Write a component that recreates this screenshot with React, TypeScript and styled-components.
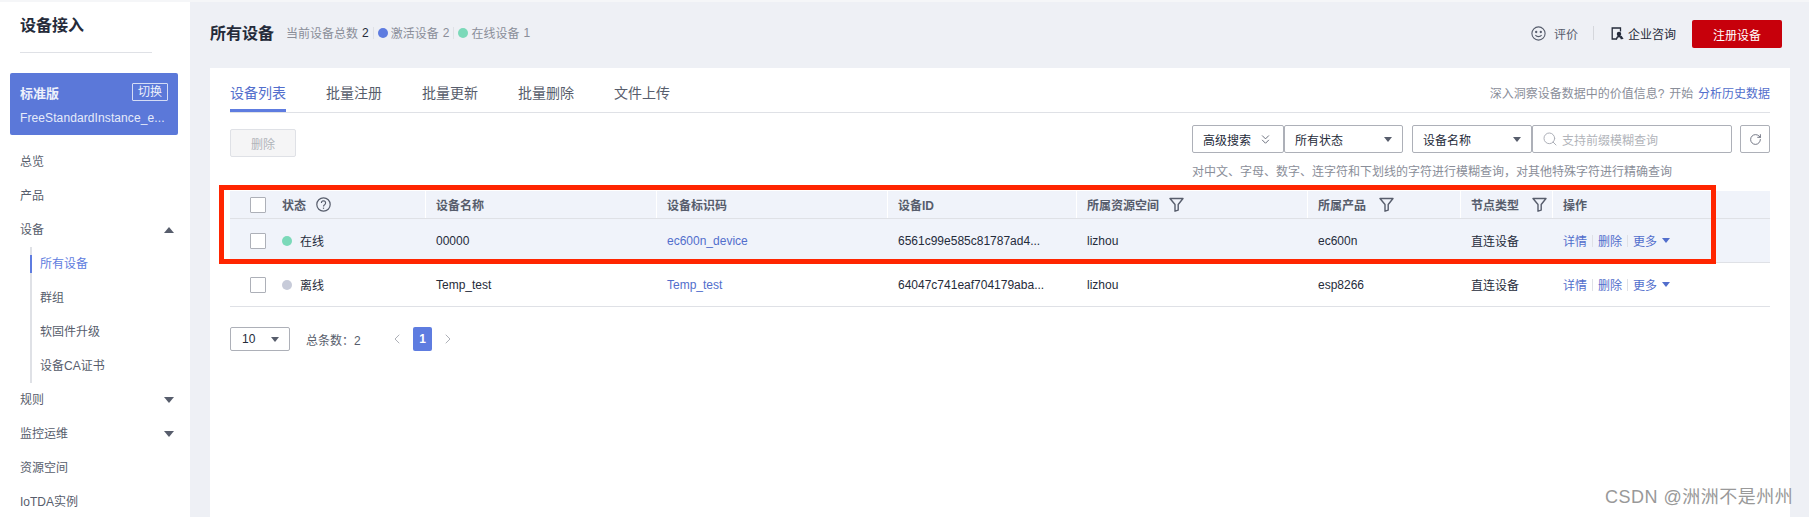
import * as React from 'react';
import styled, { createGlobalStyle } from 'styled-components';
import { ChevronLeft, ChevronRight, ChevronsDown, RotateCw, Search } from 'lucide-react';

const GlobalStyle = createGlobalStyle`
  html, body {
    margin: 0;
    height: 517px;
    overflow: hidden;
    background: #eef0f5;
  }
  * { box-sizing: border-box; }
  body {
    font-family: "Liberation Sans", "Noto Sans CJK SC", sans-serif;
    font-size: 12px;
    color: #252b3a;
  }
`;

const COLUMNS = '196px 231px 231px 189px 231px 153px 92px 217px';

const Page = styled.div`
  position: relative;
  display: flex;
  width: 1809px;
  height: 517px;
  overflow: hidden;
  border-top: 2px solid #f5f6f8;
`;

const Sidebar = styled.aside`
  flex: 0 0 190px;
  background: #fff;
  padding: 0 12px 0 10px;
  overflow: hidden;
`;

const SideTitle = styled.h1`
  margin: 0 0 0 10px;
  width: 132px;
  height: 51px;
  padding-top: 14px;
  border-bottom: 1px solid #dfe1e6;
  font-size: 16px;
  line-height: 20px;
  font-weight: 700;
  color: #252b3a;
`;

const InstanceCard = styled.div`
  margin-top: 20px;
  height: 62px;
  padding: 10px 10px 0;
  border-radius: 2px;
  background: #5b78d9;
  color: #fff;
`;

const InstanceTop = styled.div`
  display: flex;
  justify-content: space-between;
  align-items: center;
  height: 18px;
  font-size: 13px;
  font-weight: 700;
  color: #eef1fb;
`;

const SwitchTag = styled.span`
  width: 36px;
  height: 18px;
  border: 1px solid #d5dcf5;
  border-radius: 1px;
  font-size: 12px;
  font-weight: 400;
  line-height: 16px;
  text-align: center;
`;

const InstanceName = styled.div`
  margin-top: 9px;
  font-size: 12px;
  line-height: 16px;
  color: #e6ebfa;
  letter-spacing: 0.1px;
`;

const Menu = styled.nav`
  margin-top: 10px;
  display: flex;
  flex-direction: column;
`;

const MenuItem = styled.div`
  display: flex;
  justify-content: space-between;
  align-items: center;
  height: 34px;
  padding: 0 4px 0 10px;
  color: #575d6c;
  line-height: 34px;
`;

const SubMenu = styled.div`
  margin-left: 20px;
  border-left: 2px solid #dfe1e6;
`;

const SubItem = styled.div<{ $active?: boolean }>`
  position: relative;
  height: 34px;
  line-height: 34px;
  padding-left: 8px;
  color: ${p => (p.$active ? '#5e7ce0' : '#575d6c')};
  ${p =>
    p.$active
      ? `&::before {
          content: '';
          position: absolute;
          left: -2px;
          top: 8px;
          bottom: 8px;
          width: 2px;
          background: #5e7ce0;
        }`
      : ''}
`;

const Caret = styled.i<{ $up?: boolean; $color?: string }>`
  display: inline-block;
  width: 0;
  height: 0;
  border-left: 5px solid transparent;
  border-right: 5px solid transparent;
  ${p => (p.$up ? 'border-bottom' : 'border-top')}: 6px solid ${p => p.$color || '#575d6c'};
`;

const Main = styled.main`
  flex: 1;
  display: flex;
  flex-direction: column;
  padding: 0 19px 0 20px;
  min-width: 0;
`;

const Header = styled.header`
  flex: 0 0 66px;
  display: flex;
  align-items: center;
  padding: 0 8px 2px 0;
`;

const PageTitle = styled.h2`
  margin: 0 0 4px;
  font-size: 16px;
  font-weight: 700;
  color: #252b3a;
`;

const Stats = styled.div`
  display: flex;
  align-items: center;
  margin: 0 0 3px 12px;
  color: #8a8e99;
`;

const StatNum = styled.b<{ $muted?: boolean }>`
  margin-left: 4px;
  font-weight: 400;
  color: ${p => (p.$muted ? '#8a8e99' : '#252b3a')};
`;

const StatSep = styled.span`
  width: 1px;
  height: 12px;
  margin: 0 4px;
  background: #dfe1e6;
`;

const Dot = styled.i<{ $color: string; $size?: number }>`
  flex: none;
  display: inline-block;
  width: ${p => p.$size || 10}px;
  height: ${p => p.$size || 10}px;
  border-radius: 50%;
  background: ${p => p.$color};
`;

const StatDot = styled(Dot)`
  margin-right: 3px;
`;

const HeaderActions = styled.div`
  margin-left: auto;
  display: flex;
  align-items: center;
`;

const RateLink = styled.span`
  display: flex;
  align-items: center;
  gap: 8px;
  margin-bottom: 2px;
  color: #575d6c;
`;

const ActionDivider = styled.span`
  width: 1px;
  height: 14px;
  margin: 0 16px 2px 15px;
  background: #d5d7dc;
`;

const ConsultLink = styled.span`
  display: flex;
  align-items: center;
  gap: 4px;
  margin: 0 -1px 2px 1px;
  color: #252b3a;
`;

const PrimaryButton = styled.button`
  width: 90px;
  height: 28px;
  margin-left: 17px;
  border: 0;
  border-radius: 2px;
  background: #c7000b;
  color: #fff;
  font: inherit;
`;

const Card = styled.section`
  flex: 1;
  background: #fff;
  padding: 0 20px;
`;

const Tabs = styled.div`
  display: flex;
  align-items: flex-end;
  height: 45px;
  border-bottom: 1px solid #dfe1e6;
`;

const Tab = styled.div<{ $active?: boolean }>`
  height: 44px;
  margin-right: 40px;
  padding-top: 15px;
  font-size: 14px;
  line-height: 20px;
  color: ${p => (p.$active ? '#526ecc' : '#575d6c')};
  border-bottom: 3px solid ${p => (p.$active ? '#5e7ce0' : 'transparent')};
`;

const TabHint = styled.div`
  margin-left: auto;
  align-self: center;
  padding-top: 4px;
  word-spacing: 1.5px;
  color: #8a8e99;
`;

const TextLink = styled.a`
  color: #526ecc;
`;

const Toolbar = styled.div`
  display: flex;
  justify-content: space-between;
  margin-top: 12px;
  height: 28px;
`;

const DisabledButton = styled.button`
  width: 66px;
  height: 28px;
  margin-top: 4px;
  border: 1px solid #dfe1e6;
  border-radius: 2px;
  background: #f5f5f6;
  color: #b1b4ba;
  font: inherit;
`;

const Filters = styled.div`
  display: flex;
`;

const FilterBox = styled.div<{ $width: number; $gap?: number }>`
  display: flex;
  align-items: center;
  justify-content: space-between;
  width: ${p => p.$width}px;
  height: 28px;
  margin-left: ${p => p.$gap || 0}px;
  padding: 0 10px;
  border: 1px solid #adb0b8;
  border-radius: 2px;
  background: #fff;
  color: #252b3a;
`;

const SearchInput = styled(FilterBox)`
  justify-content: flex-start;
  gap: 4px;
  padding-left: 9px;
  color: #b1b4ba;
`;

const RefreshButton = styled(FilterBox)`
  justify-content: center;
  padding: 0;
  color: #575d6c;
`;

const SearchHint = styled.div`
  margin-top: 10px;
  height: 18px;
  line-height: 18px;
  text-align: right;
  padding-right: 98px;
  color: #8a8e99;
`;

const TableWrap = styled.div`
  position: relative;
  margin-top: 10px;
`;

const Row = styled.div<{ $tint?: boolean }>`
  display: grid;
  grid-template-columns: ${COLUMNS};
  height: 44px;
  align-items: center;
  border-bottom: 1px solid #dfe1e6;
  background: ${p => (p.$tint ? '#f0f3fa' : '#fff')};
`;

const HeadRow = styled(Row)`
  height: 28px;
  background: #f0f3fa;
  color: #575d6c;
  font-weight: 700;
`;

const HeadCell = styled.div`
  display: flex;
  align-items: center;
  height: 100%;
  padding-left: 10px;
  border-right: 1px solid #fff;

  &:last-child {
    border-right: 0;
  }
`;

const HeadStatusCell = styled(HeadCell)`
  padding-left: 20px;
`;

const Cell = styled.div`
  display: flex;
  align-items: center;
  padding-left: 10px;
  min-width: 0;
  white-space: nowrap;
`;

const StatusCell = styled(Cell)`
  padding-left: 20px;
`;

const Checkbox = styled.span`
  flex: none;
  width: 16px;
  height: 16px;
  margin-right: 16px;
  border: 1px solid #adb0b8;
  border-radius: 1px;
  background: #fff;
`;

const StatusText = styled.span`
  margin-left: 8px;
`;

const OpSep = styled.span`
  width: 1px;
  height: 12px;
  margin: 0 5px;
  background: #dfe1e6;
`;

const SmallCaret = styled(Caret)`
  margin-left: 5px;
  border-left-width: 4.5px;
  border-right-width: 4.5px;
  border-top-width: 5px;
`;

const HeadIcon = styled.svg`
  flex: none;
  margin-left: 10px;
`;

const FilterIcon = styled(HeadIcon)<{ $gap?: number }>`
  margin-left: ${p => p.$gap || 14}px;
`;

const Annotation = styled.div`
  position: absolute;
  left: -11px;
  top: -6px;
  width: 1497px;
  height: 79px;
  border: 5px solid #ff2500;
  pointer-events: none;
`;

const Pager = styled.div`
  display: flex;
  align-items: center;
  margin-top: 20px;
  height: 24px;
`;

const PageSize = styled.div`
  display: flex;
  align-items: center;
  justify-content: space-between;
  width: 60px;
  height: 24px;
  padding: 0 10px 0 11px;
  border: 1px solid #adb0b8;
  border-radius: 2px;
`;

const Total = styled.span`
  margin-left: 16px;
  width: 83px;
  color: #575d6c;
`;

const CurrentPage = styled.span`
  width: 19px;
  height: 24px;
  margin: 0 8px;
  border-radius: 2px;
  background: #5e7ce0;
  color: #fff;
  font-weight: 700;
  line-height: 24px;
  text-align: center;
`;

const Watermark = styled.div`
  position: absolute;
  left: 1605px;
  top: 484px;
  font-size: 18px;
  line-height: 22px;
  letter-spacing: 0.5px;
  color: #999;
  white-space: nowrap;
`;

function HelpIcon() {
  return (
    <HeadIcon width="15" height="15" viewBox="0 0 15 15" fill="none" stroke="#575d6c" strokeWidth="1.2">
      <circle cx="7.5" cy="7.5" r="6.7" />
      <path d="M5.4 5.9a2.1 2.1 0 1 1 3.2 1.8c-.8.4-1.1.9-1.1 1.8" />
      <path d="M7.5 10.6v1.2" />
    </HeadIcon>
  );
}

function FunnelIcon({ gap }: { gap?: number }) {
  return (
    <FilterIcon $gap={gap} width="15" height="15" viewBox="0 0 15 15" fill="none" stroke="#575d6c" strokeWidth="1.4">
      <path d="M1 1.5h13L9.2 7.5v5.6L6 14.2V7.5z" strokeLinejoin="round" />
    </FilterIcon>
  );
}

function SmileIcon() {
  return (
    <svg width="15" height="15" viewBox="0 0 15 15" fill="none" stroke="#575d6c" strokeWidth="1.1">
      <circle cx="7.5" cy="7.5" r="6.6" />
      <circle cx="5.2" cy="6" r=".6" fill="#575d6c" />
      <circle cx="9.8" cy="6" r=".6" fill="#575d6c" />
      <path d="M4.4 9.2c1.6 1.9 4.6 1.9 6.2 0" />
    </svg>
  );
}

function ConsultIcon() {
  return (
    <svg width="13" height="13" viewBox="0 0 13 13" fill="none" stroke="#252b3a" strokeWidth="1.3">
      <path d="M6 12H1.2V1h8.3v3.6" />
      <circle cx="8" cy="7" r="1.6" fill="#252b3a" />
      <path d="M5.6 12.2c.2-1.8 1.1-2.7 2.4-2.7s2.2.9 2.4 2.7M10 9l2 3" />
    </svg>
  );
}

interface Device {
  status: string;
  dot: string;
  name: string;
  code: string;
  id: string;
  product: string;
  tint?: boolean;
}

const devices: Device[] = [
  { status: '在线', dot: '#7bd9b9', name: '00000', code: 'ec600n_device', id: '6561c99e585c81787ad4...', product: 'ec600n', tint: true },
  { status: '离线', dot: '#c7cbd9', name: 'Temp_test', code: 'Temp_test', id: '64047c741eaf704179aba...', product: 'esp8266' },
];

export default function App() {
  return (
    <Page>
      <GlobalStyle />
      <Sidebar>
        <SideTitle>设备接入</SideTitle>
        <InstanceCard>
          <InstanceTop>
            标准版
            <SwitchTag>切换</SwitchTag>
          </InstanceTop>
          <InstanceName>FreeStandardInstance_e...</InstanceName>
        </InstanceCard>
        <Menu>
          <MenuItem>总览</MenuItem>
          <MenuItem>产品</MenuItem>
          <MenuItem>设备<Caret $up /></MenuItem>
          <SubMenu>
            <SubItem $active>所有设备</SubItem>
            <SubItem>群组</SubItem>
            <SubItem>软固件升级</SubItem>
            <SubItem>设备CA证书</SubItem>
          </SubMenu>
          <MenuItem>规则<Caret /></MenuItem>
          <MenuItem>监控运维<Caret /></MenuItem>
          <MenuItem>资源空间</MenuItem>
          <MenuItem>IoTDA实例</MenuItem>
        </Menu>
      </Sidebar>
      <Main>
        <Header>
          <PageTitle>所有设备</PageTitle>
          <Stats>
            当前设备总数<StatNum>2</StatNum>
            <StatSep />
            <StatDot $color="#5e7ce0" />激活设备<StatNum $muted>2</StatNum>
            <StatSep />
            <StatDot $color="#7bd9b9" />在线设备<StatNum $muted>1</StatNum>
          </Stats>
          <HeaderActions>
            <RateLink><SmileIcon />评价</RateLink>
            <ActionDivider />
            <ConsultLink><ConsultIcon />企业咨询</ConsultLink>
            <PrimaryButton>注册设备</PrimaryButton>
          </HeaderActions>
        </Header>
        <Card>
          <Tabs>
            <Tab $active>设备列表</Tab>
            <Tab>批量注册</Tab>
            <Tab>批量更新</Tab>
            <Tab>批量删除</Tab>
            <Tab>文件上传</Tab>
            <TabHint>深入洞察设备数据中的价值信息? 开始 <TextLink>分析历史数据</TextLink></TabHint>
          </Tabs>
          <Toolbar>
            <DisabledButton>删除</DisabledButton>
            <Filters>
              <FilterBox $width={92}>高级搜索<ChevronsDown size={15} strokeWidth={1.4} color="#575d6c" /></FilterBox>
              <FilterBox $width={119}>所有状态<SmallCaret $color="#575d6c" /></FilterBox>
              <FilterBox $width={120} $gap={9}>设备名称<SmallCaret $color="#575d6c" /></FilterBox>
              <SearchInput $width={200}><Search size={16} strokeWidth={1.5} color="#adb0b8" />支持前缀模糊查询</SearchInput>
              <RefreshButton $width={30} $gap={8}><RotateCw size={13} strokeWidth={1.5} /></RefreshButton>
            </Filters>
          </Toolbar>
          <SearchHint>对中文、字母、数字、连字符和下划线的字符进行模糊查询，对其他特殊字符进行精确查询</SearchHint>
          <TableWrap>
            <HeadRow>
              <HeadStatusCell><Checkbox />状态<HelpIcon /></HeadStatusCell>
              <HeadCell>设备名称</HeadCell>
              <HeadCell>设备标识码</HeadCell>
              <HeadCell>设备ID</HeadCell>
              <HeadCell>所属资源空间<FunnelIcon gap={10} /></HeadCell>
              <HeadCell>所属产品<FunnelIcon gap={13} /></HeadCell>
              <HeadCell>节点类型<FunnelIcon gap={13} /></HeadCell>
              <HeadCell>操作</HeadCell>
            </HeadRow>
            {devices.map(d => (
              <Row key={d.name} $tint={d.tint}>
                <StatusCell><Checkbox /><Dot $color={d.dot} /><StatusText>{d.status}</StatusText></StatusCell>
                <Cell>{d.name}</Cell>
                <Cell><TextLink>{d.code}</TextLink></Cell>
                <Cell>{d.id}</Cell>
                <Cell>lizhou</Cell>
                <Cell>{d.product}</Cell>
                <Cell>直连设备</Cell>
                <Cell>
                  <TextLink>详情</TextLink>
                  <OpSep />
                  <TextLink>删除</TextLink>
                  <OpSep />
                  <TextLink>更多</TextLink>
                  <SmallCaret $color="#526ecc" />
                </Cell>
              </Row>
            ))}
            <Annotation />
          </TableWrap>
          <Pager>
            <PageSize>10<SmallCaret $color="#575d6c" /></PageSize>
            <Total>总条数：2</Total>
            <ChevronLeft size={16} strokeWidth={1.3} color="#a0a3ab" />
            <CurrentPage>1</CurrentPage>
            <ChevronRight size={16} strokeWidth={1.3} color="#a0a3ab" />
          </Pager>
        </Card>
      </Main>
      <Watermark>CSDN @洲洲不是州州</Watermark>
    </Page>
  );
}
